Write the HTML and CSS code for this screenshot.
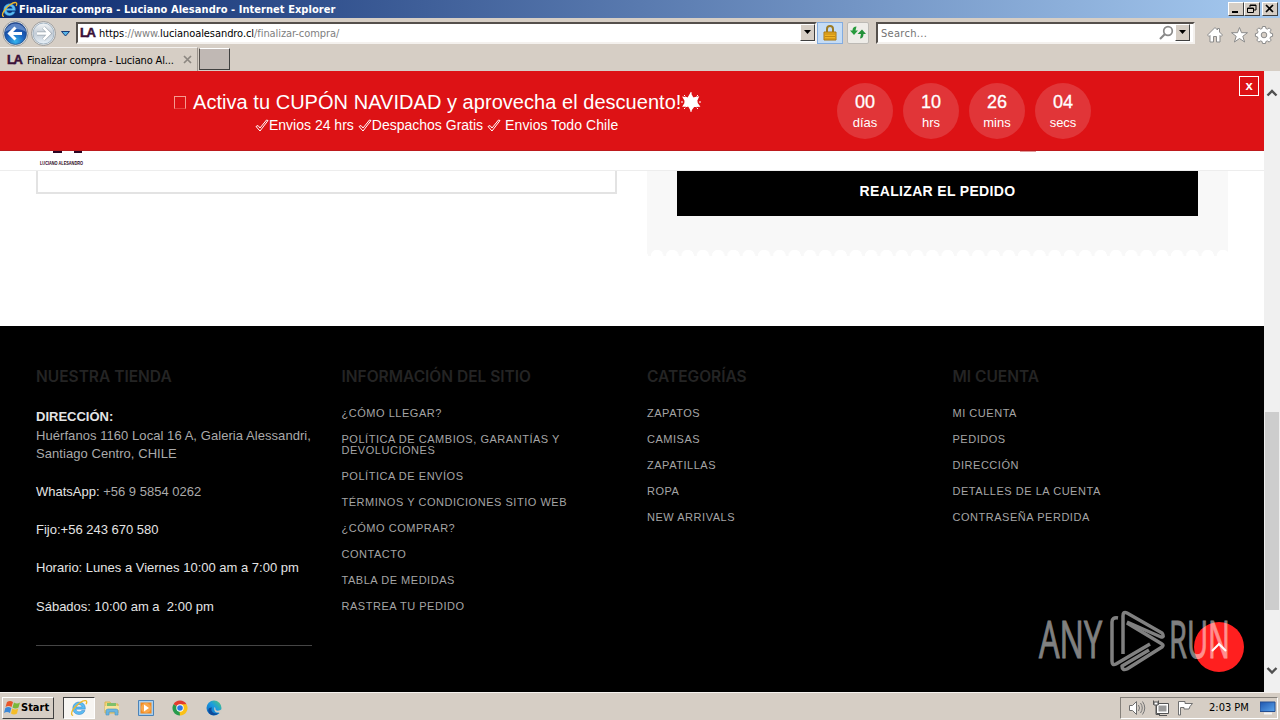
FILE: index.html
```
<!DOCTYPE html>
<html lang="es">
<head>
<meta charset="UTF-8">
<title>Finalizar compra - Luciano Alesandro</title>
<link rel="stylesheet" href="styles.css">
</head>
<body>
<!-- gradients shared by the icons -->
<svg class="defs" width="0" height="0">
    <defs>
        <radialGradient id="blueBall" cx=".5" cy=".85" r=".8"><stop offset="0" stop-color="#35b5ee"/><stop offset=".5" stop-color="#1c62bd"/><stop offset="1" stop-color="#173c8c"/></radialGradient>
        <linearGradient id="grayBall" x1="0" y1="0" x2="0" y2="1"><stop offset="0" stop-color="#f4f6f8"/><stop offset=".5" stop-color="#c3ccd6"/><stop offset="1" stop-color="#e8f1f8"/></linearGradient>
        <linearGradient id="edgeFill" x1="0" y1="1" x2="1" y2="0"><stop offset="0" stop-color="#1265bd"/><stop offset=".55" stop-color="#1a9be0"/><stop offset="1" stop-color="#55cc70"/></linearGradient>
        <linearGradient id="screenFill" x1="0" y1="0" x2="1" y2="1"><stop offset="0" stop-color="#1d55ae"/><stop offset="1" stop-color="#5ba5ed"/></linearGradient>
        <symbol id="ie" viewBox="0 0 16 16">
            <path d="M13.600 9H5.300c.2 1.500 1.300 2.400 2.800 2.400 1.100 0 1.900-.4 2.400-1.200h2.800c-.7 2.200-2.700 3.600-5.200 3.600-3.300 0-5.600-2.300-5.600-5.500S4.800 2.700 8.100 2.700s5.500 2.400 5.500 5.600zM5.400 7h5.300c-.3-1.300-1.300-2-2.600-2s-2.400.7-2.700 2z" fill="#5bbcf2" stroke="#2277c4" stroke-width=".4"/>
            <path d="M2.800 14.500C.9 14.600 1 12 2.800 9.300 5.600 5 11.500.8 14 1.500c1.200.4 1 1.700.3 3.200" fill="none" stroke="#efb929" stroke-width="1.200"/>
        </symbol>
    </defs>
</svg>

<div class="titlebar">
    <svg class="title-icon" width="17" height="17"><use href="#ie"/></svg>
    <span class="title-text">Finalizar compra - Luciano Alesandro - Internet Explorer</span>
    <div class="win-buttons">
        <span class="win-btn"><svg width="14" height="12"><path d="M3 8h6v2H3z"/></svg></span>
        <span class="win-btn"><svg width="14" height="12"><path d="M5 2h6v5H9M5 2v2M5 2.500h6M2.500 5h6v4.500h-6zM2.500 5.500h6" fill="none" stroke="#000"/></svg></span>
        <span class="win-btn close"><svg width="14" height="12"><path d="M3 2l7 7M10 2L3 9" stroke="#000" stroke-width="1.700"/></svg></span>
    </div>
</div>

<div class="toolbar">
    <svg class="nav" width="74" height="28" viewBox="0 0 74 28">
        <circle cx="15.500" cy="14.500" r="12.500" fill="#eee" stroke="#9c9c9c"/>
        <circle cx="43.500" cy="14.500" r="12" fill="#eee" stroke="#9c9c9c"/>
        <circle cx="15.500" cy="14.500" r="11" fill="url(#blueBall)" stroke="#21477f" stroke-width=".7"/>
        <path d="M4.800 13a11 11 0 0 1 21.400 0c-6-4-15-4-21.400 0z" fill="#7fa5dc" opacity=".65"/>
        <path d="M22 14.500H10M15.500 8.500l-6 6 6 6" fill="none" stroke="#fff" stroke-width="3"/>
        <circle cx="43.500" cy="14.500" r="10.500" fill="url(#grayBall)" stroke="#a4b5c4"/>
        <path d="M37 14.500h12M43.500 8.500l6 6-6 6" fill="none" stroke="#9ba5ae" stroke-width="3.800"/>
        <path d="M37 14.500h12M43.500 8.500l6 6-6 6" fill="none" stroke="#fff" stroke-width="2.500"/>
        <path d="M61.500 12.500h8l-4 4.500z" fill="#56b5e8" stroke="#173c78"/>
    </svg>
    <div class="address">
        <span class="favicon">LA</span>
        <span class="url">https<i>://www.</i>lucianoalesandro.cl<i>/finalizar-compra/</i></span>
        <span class="drop"><svg width="9" height="5"><path d="M1 0h7L4.500 4z"/></svg></span>
    </div>
    <div class="tool lock">
        <svg width="16" height="18" viewBox="0 0 16 18"><path d="M5 8V5a3 3 0 0 1 6 0v3" fill="none" stroke="#9c7b24" stroke-width="2"/><path d="M2 8h12v8H2z" fill="#f0b323" stroke="#a87510"/><path d="M3 10h10M3 12.500h10M3 15h10" stroke="#c28714"/></svg>
    </div>
    <div class="tool refresh">
        <svg width="18" height="16" viewBox="0 0 18 16"><path d="M1 5.500h2.500C3.500 3 5 1.500 7.500 1.500L6.500 5.500H9L5 10z" fill="#279b3c"/><path d="M8.500 9l4.500-4.500L17 9h-2.500c0 3-1.500 4.500-3.500 4.500l1-4.500z" fill="#23913a"/></svg>
    </div>
    <div class="search">
        <span class="hint">Search...</span>
        <svg width="16" height="16" viewBox="0 0 16 16"><circle cx="9" cy="6" r="4.300" fill="none" stroke="#898989" stroke-width="1.700"/><path d="M6 9l-5 5" stroke="#898989" stroke-width="2.200"/></svg>
        <span class="drop"><svg width="9" height="5"><path d="M1 0h7L4.500 4z"/></svg></span>
    </div>
    <svg class="ie-tools" width="68" height="20" viewBox="0 0 68 20">
        <g fill="#fff" stroke="#8b8b8b">
            <path d="M1.500 11L9 3.500l2.500 2.500V4.500h2V8l3 3-1.500 1.500-1-1v6.500h-3.500v-5.500h-3V18H4v-6.500l-1 1z"/>
            <path d="M33.500 3.500l2 5.200h6l-4.700 3.600 1.800 5.700-5.100-3.500-5.100 3.500 1.800-5.700-4.700-3.600h6z"/>
            <path d="M56.500 3h3l.4 2 1.500.6 1.800-1.200 2 2L64 8.200l.6 1.500 2 .4v2.800l-2 .4-.6 1.500 1.200 1.800-2 2-1.800-1.200-1.500.6-.4 2h-3l-.4-2-1.500-.6-1.800 1.200-2-2 1.200-1.800-.6-1.500-2-.4v-2.800l2-.4.6-1.500-1.200-1.800 2-2 1.800 1.200 1.500-.6z" transform="translate(0 -.500)"/>
            <circle cx="58" cy="11" r="2.800" fill="#d6cec5"/>
        </g>
    </svg>
</div>

<div class="tabs">
    <div class="tab">
        <span class="favicon">LA</span>
        <span class="tab-text">Finalizar compra - Luciano Al...</span>
        <svg width="9" height="9"><path d="M1 1l7 7M8 1L1 8" stroke="#8c8781" stroke-width="1.700"/></svg>
    </div>
    <div class="new-tab"></div>
</div>

<div class="viewport">
    <div class="page">
        <div class="banner">
            <div class="banner-text">
                <div class="promo">
                    <span class="tofu"></span>
                    <span class="promo-text">Activa tu CUPÓN NAVIDAD y aprovecha el descuento!</span>
                    <svg width="20" height="20" viewBox="0 0 20 20"><path d="M9.500 2l2.500 4.300 5-1-2 4.700 3 4-5.300.3L10 18l-2.300-4L2.500 14l2.500-4L2.500 5.500l4.500.8z" fill="#fff" stroke="#fff" stroke-width="1.500"/><path d="M10 0v20M0 10h20M3 3l14 14M17 3L3 17" stroke="#fff" stroke-dasharray="2 1"/></svg>
                </div>
                <div class="perks">
                    <svg class="check" viewBox="0 0 14 13"><path d="M1 7.500l2-1 2 2.500L11.500 1l1.500.5-8 10.500z"/></svg><span class="perk1">Envios 24 hrs</span>
                    <svg class="check" viewBox="0 0 14 13"><path d="M1 7.500l2-1 2 2.500L11.500 1l1.500.5-8 10.500z"/></svg><span class="perk2">Despachos Gratis</span>
                    <svg class="check" viewBox="0 0 14 13"><path d="M1 7.500l2-1 2 2.500L11.500 1l1.500.5-8 10.500z"/></svg><span class="perk3">Envios Todo Chile</span>
                </div>
            </div>
            <div class="countdown">
                <div class="unit"><b>00</b>días</div>
                <div class="unit"><b>10</b>hrs</div>
                <div class="unit"><b>26</b>mins</div>
                <div class="unit"><b>04</b>secs</div>
            </div>
            <div class="banner-close">x</div>
        </div>

        <div class="site-header">
            <svg width="44" height="20" viewBox="0 0 44 20"><path d="M13 0h9v2h-9zM34 0h8v2h-8z" fill="#2b0624"/><text x="0" y="14" textLength="43" lengthAdjust="spacingAndGlyphs">LUCIANO ALESANDRO</text></svg>
            <span class="cart-edge"></span>
        </div>

        <div class="checkout">
            <div class="billing"></div>
            <div class="order">
                <div class="order-body"><div class="place-order">REALIZAR EL PEDIDO</div></div>
                <div class="scallops"></div>
            </div>
        </div>

        <div class="footer">
            <div class="col">
                <h5>NUESTRA TIENDA</h5>
                <div class="contact">
                    <p class="addr"><strong>DIRECCIÓN:</strong><br>Huérfanos 1160 Local 16 A, Galeria Alessandri, Santiago Centro, CHILE</p>
                    <p><em>WhatsApp:</em> +56 9 5854 0262</p>
                    <p><em>Fijo:+56 243 670 580</em></p>
                    <p><em>Horario: Lunes a Viernes 10:00 am a 7:00 pm</em></p>
                    <p class="saturday"><em>Sábados: 10:00 am a &nbsp;2:00 pm</em></p>
                </div>
                <div class="rule"></div>
            </div>
            <div class="col">
                <h5>INFORMACIÓN DEL SITIO</h5>
                <ul>
                    <li>¿CÓMO LLEGAR?</li>
                    <li>POLÍTICA DE CAMBIOS, GARANTÍAS Y DEVOLUCIONES</li>
                    <li>POLÍTICA DE ENVÍOS</li>
                    <li>TÉRMINOS Y CONDICIONES SITIO WEB</li>
                    <li>¿CÓMO COMPRAR?</li>
                    <li>CONTACTO</li>
                    <li>TABLA DE MEDIDAS</li>
                    <li>RASTREA TU PEDIDO</li>
                </ul>
            </div>
            <div class="col">
                <h5>CATEGORÍAS</h5>
                <ul>
                    <li>ZAPATOS</li>
                    <li>CAMISAS</li>
                    <li>ZAPATILLAS</li>
                    <li>ROPA</li>
                    <li>NEW ARRIVALS</li>
                </ul>
            </div>
            <div class="col">
                <h5>MI CUENTA</h5>
                <ul>
                    <li>MI CUENTA</li>
                    <li>PEDIDOS</li>
                    <li>DIRECCIÓN</li>
                    <li>DETALLES DE LA CUENTA</li>
                    <li>CONTRASEÑA PERDIDA</li>
                </ul>
            </div>
        </div>
        <div class="to-top"><svg width="18" height="12"><path d="M2 10l7-7 7 7" fill="none" stroke="#fff" stroke-width="2"/></svg></div>
        <svg class="watermark" width="198" height="76" viewBox="0 0 198 76">
            <g fill="#fff" stroke="#fff" stroke-width=".7">
                <text transform="translate(1 49) scale(1 1.480)" textLength="63" lengthAdjust="spacingAndGlyphs">ANY</text>
                <text transform="translate(131 49) scale(1 1.480)" textLength="61" lengthAdjust="spacingAndGlyphs">RUN</text>
            </g>
            <g fill="none" stroke="#fff" stroke-width="3.500" stroke-linejoin="round">
                <path d="M80 9q-6-1-6 4v39q0 5 4 3l34-20"/>
                <path d="M85 45V7q0-5 4-3l35 20q3 4-1 4L89 13"/>
                <path d="M89 14l35 21q2 1 0 3L89 60q-5 2-5-3l27-16"/>
            </g>
        </svg>
    </div>
    <div class="scrollbar">
        <svg width="12" height="9"><path d="M1.500 7.500L6 3l4.500 4.500" fill="none" stroke="#505050" stroke-width="2.400"/></svg>
        <div class="thumb"></div>
        <svg width="12" height="9"><path d="M1.500 2L6 6.500 10.500 2" fill="none" stroke="#505050" stroke-width="2.400"/></svg>
    </div>
</div>

<div class="taskbar">
    <div class="start">
        <svg width="17" height="16" viewBox="0 0 17 16"><path d="M3 2q3-2 6 0L7.500 7q-3-2-6 0z" fill="#e8562a"/><path d="M10 2.500q3 2 6 0L14.500 7.500q-3 2-6 0z" fill="#7ab83b"/><path d="M1.300 8q3-2 6 0L6 13q-3-2-6 0z" fill="#3c88d8"/><path d="M8.200 8.500q3 2 6 0L13 13.500q-3 2-6 0z" fill="#f5bd28"/></svg>
        <span>Start</span>
    </div>
    <div class="task active"><svg width="18" height="18"><use href="#ie"/></svg></div>
    <div class="task"><svg width="18" height="18" viewBox="0 0 18 18"><path d="M2 3h5l1 2h7v9H2z" fill="#f4d77a" stroke="#d8b652"/><path d="M4 4h9v4H4z" fill="#7fbf6b"/><path d="M2 7h14v4H2z" fill="#f8e39c"/><path d="M3 16v-4q0-2 2-2h8q2 0 2 2v4h-3v-3H6v3z" fill="#6bb5e0" stroke="#4b94c4" stroke-width=".6"/></svg></div>
    <div class="task"><svg width="16" height="16" viewBox="0 0 16 16"><path d="M.5.500h15v15H.5z" fill="#a9cfee" stroke="#4b83b8"/><path d="M2.500 2.500h11v11h-11z" fill="#f28a1f"/><circle cx="8" cy="8" r="5" fill="#f8a74b"/><path d="M6 4.500l5 3.500-5 3.500z" fill="#fff"/></svg></div>
    <div class="task"><svg width="16" height="16" viewBox="0 0 16 16"><path d="M8 8L1.500 4.250A7.500 7.500 0 0 1 14.500 4.250z" fill="#e33b2e"/><path d="M8 8L1.500 4.250A7.500 7.500 0 0 0 8 15.500z" fill="#279b4c"/><path d="M8 8h-1l1 7.500A7.500 7.500 0 0 0 14.500 4.250H8z" fill="#fbc116"/><circle cx="8" cy="8" r="3.700" fill="#fff"/><circle cx="8" cy="8" r="2.800" fill="#2b78e4"/></svg></div>
    <div class="task"><svg width="16" height="16" viewBox="0 0 16 16"><circle cx="8" cy="8" r="7.500" fill="url(#edgeFill)"/><path d="M6 7.500c-2 3 1 7 6.500 5.500-2 2.500-6 3-8.500 1S1.500 7 6 7.500z" fill="#0f4b9a"/><path d="M8.500 7c1.500 1 .5 2.500 1.500 3.300 1.500 1 4.500.2 5.500-1.300v5l-3-1.500c-3 .5-5-2-4-5.500z" fill="#d4cdc4"/></svg></div>
    <div class="tray">
        <svg width="18" height="18" viewBox="0 0 18 18"><path d="M1.500 6.500h3l4-4v13l-4-4h-3z" fill="#fff" stroke="#6e6e6e"/><path d="M10.500 6q2 3 0 6M12.500 4q3.500 5 0 10M14.500 2.500q4.500 6.500 0 13" fill="none" stroke="#777"/></svg>
        <svg width="18" height="18" viewBox="0 0 18 18"><path d="M5.500 5.500h10v8h-10z" fill="#999" stroke="#fff" stroke-width="2"/><path d="M4.500 4.500h12v10h-12zM7 16.500h8M1.500 1.500v4h5v-4M4 5.500v10h4" fill="none" stroke="#555"/><path d="M2 3h4v3H2z" fill="#fff" stroke="#555"/></svg>
        <svg width="18" height="18" viewBox="0 0 18 18"><path d="M2.500 16V2.500H9V4.500h7.500L14 7.500l-1 2.500H8V8.500H4.500V16z" fill="#fff" stroke="#707070"/></svg>
        <span class="clock">2:03 PM</span>
        <svg width="16" height="14" viewBox="0 0 16 14"><path d="M0 1h15v9.500H0z" fill="url(#screenFill)" stroke="#244e91"/><path d="M4 12.500h8" stroke="#f4f4f4" stroke-width="2"/></svg>
    </div>
</div>
</body>
</html>
```
FILE: styles.css
```
*{margin:0;padding:0;box-sizing:border-box}
body{
    width:1280px;
    height:720px;
    overflow:hidden;
    display:flex;
    flex-direction:column;
    background:#d6cec5;
    font-family:"Liberation Sans",Arial,sans-serif;
    color:#000;
}
svg{display:block;flex:none}
.defs{position:absolute}
.titlebar,.toolbar,.tabs,.taskbar{
    font-family:"DejaVu Sans Condensed","DejaVu Sans",Tahoma,sans-serif;
    font-size:11px;
    white-space:nowrap;
}

/* window chrome */
.titlebar{
    height:18px;
    display:flex;
    align-items:center;
    padding:0 2px 0 1px;
    background:linear-gradient(to right,#0c2a6e,#a6caf0);
}
.title-text{
    margin-left:1px;
    color:#fff;
    font-weight:bold;
    letter-spacing:.05px;
}
.win-buttons{display:flex;margin-left:auto}
.win-btn{
    width:16px;
    height:14px;
    background:#d6cec5;
    border:1px solid;
    border-color:#fff #404040 #404040 #fff;
}
.close{margin-left:2px}
.toolbar{
    height:29px;
    display:flex;
    align-items:center;
}
.nav{margin-right:2px}
.address,.search{
    height:22px;
    display:flex;
    align-items:center;
    background:#fff;
    border:2px solid;
    border-color:#55504c #f4f1ee #f4f1ee #55504c;
}
.address{width:741px}
.favicon{
    font-family:"Liberation Sans",Arial,sans-serif;
    font-size:13px;
    font-weight:bold;
    letter-spacing:-1.500px;
    color:#3a1038;
    -webkit-text-stroke:.5px #3a1038;
}
.address .favicon{margin-left:2px;width:19px}
.url{padding-top:1px;letter-spacing:-.07px}
.url i{font-style:normal;color:#808080}
.drop{
    width:15px;
    height:17px;
    margin-left:auto;
    display:flex;
    align-items:center;
    justify-content:center;
    background:#d6cec5;
    border:1px solid;
    border-color:#fff #404040 #404040 #fff;
}
.tool{
    height:22px;
    display:flex;
    align-items:center;
    justify-content:center;
    border:1px solid #bdbab5;
}
.lock{width:26px;background:#c5dcf5;border-color:#83ace0}
.refresh{width:22px;margin-left:4px;background:#eeece8;border-radius:2px}
.search{width:319px;margin-left:7px;color:#737373;padding-left:3px}
.hint{padding-top:2px;letter-spacing:.3px}
.search>svg{margin-left:auto}
.search .drop{margin-left:0;margin-right:3px}
.ie-tools{margin:2px 0 0 11px}
.tabs{height:24px;display:flex}
.tab{
    width:198px;
    display:flex;
    align-items:center;
    padding-left:7px;
    border-top:1px solid #f4f1ee;
    border-right:1px solid #9c958e;
}
.tab .favicon{width:20px}
.tab-text{width:156px;padding-top:2px;letter-spacing:-.15px}
.new-tab{
    width:31px;
    height:22px;
    margin:1px 0 0 1px;
    background:#c0b8b4;
    border:1px solid;
    border-color:#fff #404040 #404040 #55504c;
}

/* page */
.viewport{height:621px;display:flex}
.page{
    position:relative;
    width:1264px;
    background:#fff;
}
.banner{
    position:relative;
    height:80px;
    display:flex;
    background:#dd1215;
    border-bottom:1px solid #bd1a1d;
    color:#fff;
}
.banner-text{width:837px;padding:19px 0 0 174px}
.promo{
    display:flex;
    align-items:center;
    height:24px;
    font-size:20px;
    white-space:nowrap;
}
.promo-text{letter-spacing:.04px}
.tofu{
    width:12px;
    height:13px;
    margin-right:7px;
    border:1px solid #f59a90;
    border-bottom-color:#e5403d;
}
.perks{
    display:flex;
    align-items:center;
    height:22px;
    margin-left:81px;
    font-size:14px;
    white-space:nowrap;
}
.check{width:14px;height:13px;fill:none;stroke:#fff}
.perk1,.perk2{margin-right:4px}
.perk3{margin-left:4px;letter-spacing:.08px}
.countdown{display:flex;gap:10px;padding-top:12px}
.unit{
    width:56px;
    height:56px;
    border-radius:50%;
    background:#e13538;
    text-align:center;
    font-size:13px;
    line-height:19px;
    padding-top:8px;
}
.unit b{
    display:block;
    font-size:18px;
    font-weight:normal;
    line-height:22px;
    -webkit-text-stroke:.3px #fff;
}
.banner-close{
    position:absolute;
    top:5px;
    right:5px;
    width:20px;
    height:20px;
    border:1px solid #fff;
    text-align:center;
    font-size:13px;
    font-weight:bold;
    line-height:17px;
}
.site-header{
    height:20px;
    display:flex;
    padding-left:40px;
    border-bottom:1px solid #ededed;
}
.site-header svg{overflow:visible}
.site-header text{
    font-size:5px;
    font-weight:bold;
    fill:#2b0624;
}
.cart-edge{
    width:16px;
    height:1px;
    margin-left:936px;
    background:#e39a9a;
}
.checkout{
    height:155px;
    display:flex;
    gap:30px;
    padding:0 36px;
}
.billing{
    width:581px;
    height:23px;
    border:2px solid #e3e3e3;
    border-top:0;
}
.order{width:581px}
.order-body{
    height:78px;
    padding:0 30px;
    background:#f8f8f8;
}
.place-order{
    height:45px;
    background:#000;
    color:#fff;
    text-align:center;
    font-size:14px;
    font-weight:bold;
    letter-spacing:.33px;
    line-height:41px;
}
.scallops{
    height:7px;
    background:radial-gradient(circle at 8px 7px,#fff 6px,#f8f8f8 6.500px) 2px 0/15.300px 7px;
}
.footer{
    height:366px;
    display:grid;
    grid-template-columns:repeat(4,1fr);
    gap:30px;
    padding:41px 36px 0;
    background:#000;
}
h5{
    font-family:Inter,"Open Sans",sans-serif;
    font-size:15.500px;
    font-weight:600;
    line-height:20px;
    color:#242424;
    white-space:nowrap;
}
.contact{
    margin-top:20px;
    font-size:13px;
    line-height:18px;
    color:#aaa;
}
.contact p{margin-bottom:20px}
.contact .addr{letter-spacing:.06px}
.contact .saturday{padding-top:1px}
.contact strong,.contact em{font-style:normal;color:#e4e4e4}
.contact strong{letter-spacing:0;line-height:20px}
.rule{margin-top:29px;height:1px;background:#454545}
ul{
    list-style:none;
    margin-top:21px;
    font-size:11px;
    line-height:11px;
    letter-spacing:.53px;
    color:#a5a5a5;
}
li{margin-bottom:15px}
.to-top{
    position:absolute;
    left:1194px;
    top:551px;
    width:50px;
    height:50px;
    display:flex;
    align-items:center;
    justify-content:center;
    border-radius:50%;
    background:#ff1f1f;
}
.watermark{
    position:absolute;
    left:1038px;
    top:538px;
    opacity:.5;
    overflow:visible;
}
.watermark text{
    font-family:"Open Sans",sans-serif;
    font-size:35px;
}
.scrollbar{
    width:16px;
    display:flex;
    flex-direction:column;
    align-items:center;
    padding:17px 0;
    background:#f0f0f0;
}
.thumb{
    width:14px;
    height:198px;
    margin:315px 0 auto;
    background:#cdcdcd;
}

/* taskbar */
.taskbar{
    height:28px;
    display:flex;
    align-items:center;
    padding:2px 2px 0 2px;
    border-top:1px solid #f4f1ee;
}
.start{
    width:52px;
    height:22px;
    display:flex;
    align-items:center;
    font-weight:bold;
    border:1px solid;
    border-color:#fff #404040 #404040 #fff;
    margin-right:9px;
    padding-left:1px;
}
.task{
    width:34px;
    height:22px;
    display:flex;
    align-items:center;
    justify-content:center;
}
.active{
    width:32px;
    background:#f7f5f2;
    border:1px solid;
    border-color:#404040 #fff #fff #404040;
}
.tray{
    width:158px;
    height:22px;
    margin-left:auto;
    display:flex;
    align-items:center;
    gap:6px;
    padding-left:7px;
    border:1px solid;
    border-color:#85807a #fff #fff #85807a;
}
.clock{width:45px;margin:0 0 0 9px}
```
